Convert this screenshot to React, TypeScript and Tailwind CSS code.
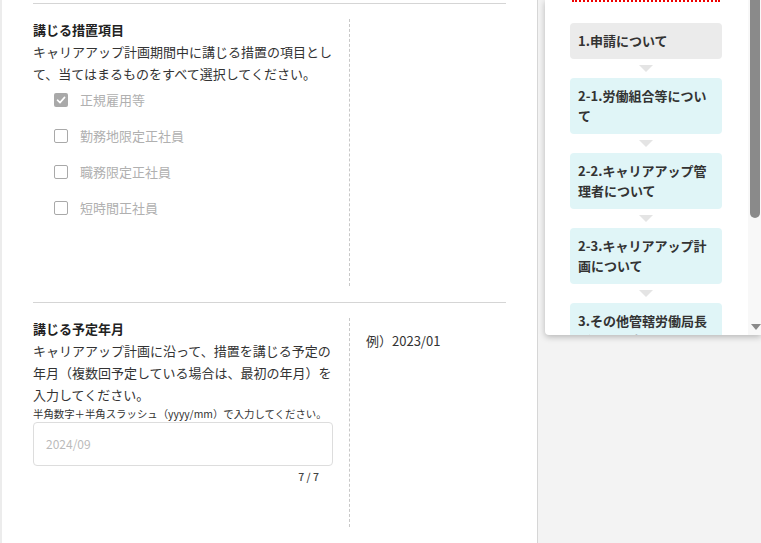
import React from "react";

const font = { fontFamily: '"Noto Sans CJK JP", "Noto Sans", sans-serif' };

function Check({ checked }: { checked?: boolean }) {
  if (checked) {
    return (
      <span className="flex h-[14px] w-[14px] items-center justify-center rounded-[2px] bg-[#a9a9a9]">
        <svg width="10" height="10" viewBox="0 0 10 10" fill="none">
          <path d="M1.5 5.2 L4 7.6 L8.6 2.4" stroke="#fff" strokeWidth="1.6" strokeLinecap="round" strokeLinejoin="round" />
        </svg>
      </span>
    );
  }
  return <span className="h-[14px] w-[14px] rounded-[2px] border border-[#a9a9a9] bg-white" />;
}

function Arrow() {
  return (
    <div className="flex h-[19px] items-center justify-center">
      <div className="h-0 w-0 border-x-[7px] border-t-[7px] border-x-transparent border-t-[#e4e4e4]" />
    </div>
  );
}

function Step({ text, gray }: { text: string; gray?: boolean }) {
  return (
    <div
      className={`rounded-[4px] px-[8px] py-[8px] text-[13px] font-bold leading-[20px] text-[#333] ${
        gray ? "bg-[#ebebeb]" : "bg-[#e0f5f7]"
      }`}
    >
      {text}
    </div>
  );
}

export default function App() {
  const options = [
    { label: "正規雇用等", checked: true },
    { label: "勤務地限定正社員" },
    { label: "職務限定正社員" },
    { label: "短時間正社員" },
  ];
  return (
    <div className="flex h-[543px] w-[761px] overflow-hidden bg-[#f3f3f3]" style={font}>
      {/* main */}
      <div className="h-full w-[538px] shrink-0 border-l-2 border-r border-l-[#ececec] border-r-[#d6d6d6] bg-white pl-[31px] pt-[3px]">
        <div className="w-[473px]">
          {/* section 1 */}
          <div className="flex border-t border-[#d5d5d5] pb-[16px] pt-[15px]">
            <div className="h-[267px] w-[317px] shrink-0 border-r border-dashed border-[#c8c8c8] pr-[16px]">
              <div className="text-[13px] font-bold leading-[22px] text-[#222]">講じる措置項目</div>
              <div className="text-[13px] leading-[22px] text-[#333]">
                キャリアアップ計画期間中に講じる措置の項目として、当てはまるものをすべて選択してください。
              </div>
              <div className="flex flex-col gap-[6px] pl-[21px]">
                {options.map((o) => (
                  <div key={o.label} className="flex h-[30px] items-center gap-[12px]">
                    <Check checked={o.checked} />
                    <span className="text-[13px] text-[#b0b0b0]">{o.label}</span>
                  </div>
                ))}
              </div>
            </div>
            <div className="flex-1" />
          </div>
          {/* section 2 */}
          <div className="flex border-t border-[#d5d5d5] pb-[16px] pt-[15px]">
            <div className="h-[209px] w-[317px] shrink-0 border-r border-dashed border-[#c8c8c8] pr-[16px]">
              <div className="text-[13px] font-bold leading-[22px] text-[#222]">講じる予定年月</div>
              <div className="text-[13px] leading-[22px] text-[#333]">
                キャリアアップ計画に沿って、措置を講じる予定の年月（複数回予定している場合は、最初の年月）を入力してください。
              </div>
              <div className="whitespace-nowrap text-[10.4px] leading-[16px] text-[#333]">
                半角数字＋半角スラッシュ（yyyy/mm）で入力してください。
              </div>
              <div className="flex h-[44px] w-[300px] items-center rounded-[4px] border border-[#dddddd] px-[12px] text-[12px] text-[#bbbbbb]">
                2024/09
              </div>
              <div className="mt-[3px] w-[300px] pr-[14px] text-right text-[10.5px] font-medium leading-[16px] text-[#444]">
                7 / 7
              </div>
            </div>
            <div className="flex-1 pl-[16px] pt-[12px] text-[13px] leading-[22px] text-[#333]">例）2023/01</div>
          </div>
        </div>
      </div>
      {/* right side */}
      <div className="h-full flex-1 pl-[7px]">
        <div className="flex h-[335px] overflow-hidden rounded-bl-[4px] bg-white shadow-[0_2px_6px_rgba(0,0,0,0.25)]">
          <div className="w-[203px] shrink-0 pl-[25px] pr-[26px]">
            <div className="ml-[2px] mr-[2px] h-[3px] border-t-2 border-dotted border-[#ee0000]" />
            <div className="pt-[20px]">
              <Step text="1.申請について" gray />
              <Arrow />
              <Step text="2-1.労働組合等について" />
              <Arrow />
              <Step text="2-2.キャリアアップ管理者について" />
              <Arrow />
              <Step text="2-3.キャリアアップ計画について" />
              <Arrow />
              <Step text="3.その他管轄労働局長が定める書類について" />
            </div>
          </div>
          <div className="relative flex w-[13px] shrink-0 flex-col bg-[#f8f8f8]">
            <div className="ml-[2px] h-[218px] w-[10px] rounded-b-[5px] bg-[#8a8a8a]" />
            <div className="flex-1" />
            <div className="mb-[5px] ml-[3px] h-0 w-0 border-x-[5px] border-t-[6px] border-x-transparent border-t-[#8a8a8a]" />
          </div>
        </div>
      </div>
    </div>
  );
}
